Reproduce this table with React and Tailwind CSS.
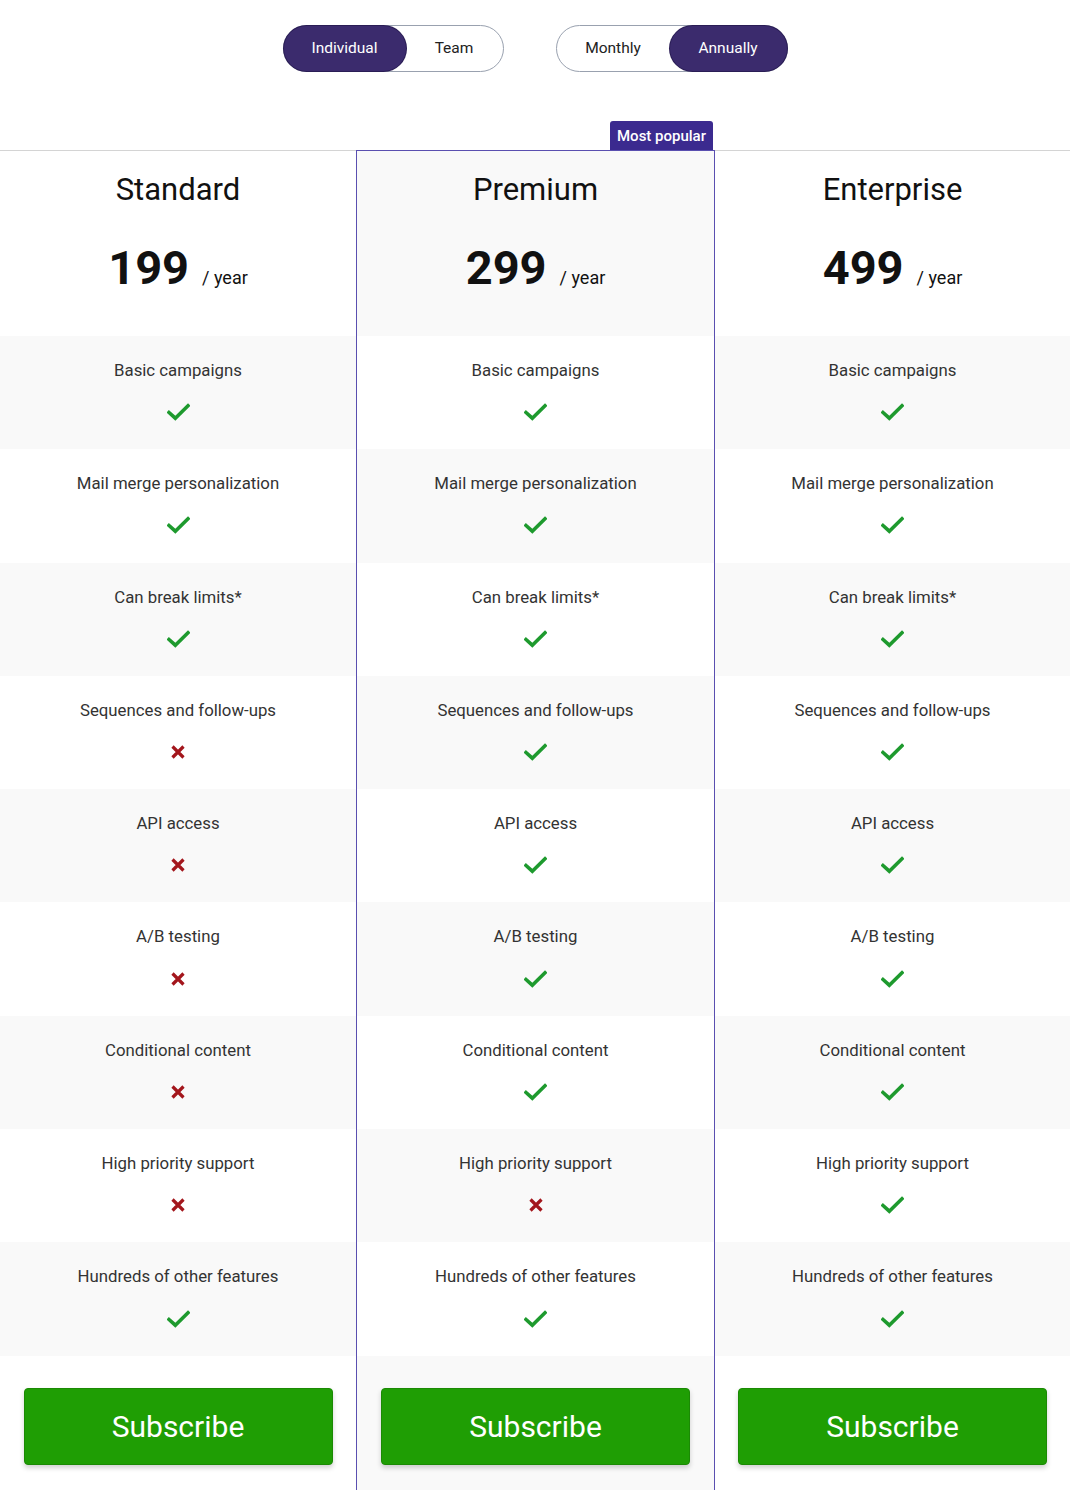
import React, { useState } from 'react';

const features = [
  'Basic campaigns',
  'Mail merge personalization',
  'Can break limits*',
  'Sequences and follow-ups',
  'API access',
  'A/B testing',
  'Conditional content',
  'High priority support',
  'Hundreds of other features',
];

const plans = [
  { name: 'Standard', price: 199, has: [1, 1, 1, 0, 0, 0, 0, 0, 1] },
  { name: 'Premium', price: 299, has: [1, 1, 1, 1, 1, 1, 1, 0, 1], popular: true },
  { name: 'Enterprise', price: 499, has: [1, 1, 1, 1, 1, 1, 1, 1, 1] },
];

function Check() {
  return (
    <svg width="23" height="18" viewBox="0 0 23 18" fill="none">
      <path d="M2 9.5l6.3 5.7L21 2.8" stroke="#1e9a2e" strokeWidth="3.6" strokeLinecap="square" />
    </svg>
  );
}

function Cross() {
  return (
    <svg width="16" height="16" viewBox="0 0 16 16" fill="none">
      <path d="M2.5 2.5l11 11M13.5 2.5l-11 11" stroke="#a3161c" strokeWidth="3.2" />
    </svg>
  );
}

function Toggle({ options, value, onChange }) {
  return (
    <div className="flex h-[47px] rounded-full border border-gray-400 bg-white">
      {options.map((o) => (
        <button
          key={o.label}
          onClick={() => onChange(o.label)}
          className={
            (value === o.label
              ? 'bg-[#3b2b6d] text-white shadow-[0_0_0_1px_#2a1d55] '
              : 'text-[#222] ') + 'h-full rounded-full text-[15.5px] ' + o.w
          }
        >
          {o.label}
        </button>
      ))}
    </div>
  );
}

function PlanColumn({ plan }) {
  const odd = plan.popular;
  const bgA = odd ? 'bg-[#f9f9f9]' : 'bg-white';
  const bgB = odd ? 'bg-white' : 'bg-[#f9f9f9]';
  return (
    <div
      className={
        'relative flex flex-col ' +
        (plan.popular ? 'border-x border-t border-[#5a4fb0] -mt-px' : '')
      }
    >
      {plan.popular && (
        <div className="absolute -top-[30px] right-px h-[29px] rounded-t-[3px] bg-[#3b2a8f] px-[7px] pt-[4px] text-[15px] font-medium text-white">
          Most popular
        </div>
      )}
      <div className={'flex h-[185px] flex-col items-center ' + bgA}>
        <div className="mt-[16px] text-[31px] text-[#111]">{plan.name}</div>
        <div className="mt-[30px] flex items-baseline">
          <span className="text-[47px] font-bold leading-none text-[#111]">{plan.price}</span>
          <span className="ml-[13px] text-[18px] text-[#111]">/ year</span>
        </div>
      </div>
      {features.map((f, i) => (
        <div
          key={f}
          className={'flex h-[113.3px] flex-col items-center ' + (i % 2 === 0 ? bgB : bgA)}
        >
          <div className="mt-[22px] text-[16.8px] text-[#333]">{f}</div>
          <div className="mt-[19px] flex h-[20px] items-center">
            {plan.has[i] ? <Check /> : <Cross />}
          </div>
        </div>
      ))}
      <div className={'flex flex-1 justify-center pt-[32px] pb-[25px] ' + bgA}>
        <button className="h-[77px] w-[309px] rounded-[4px] border border-[#1b8a04] bg-[#1f9e04] text-[30px] text-white shadow-[0_3px_5px_rgba(0,0,0,0.18)]">
          Subscribe
        </button>
      </div>
    </div>
  );
}

export default function App() {
  const [who, setWho] = useState('Individual');
  const [period, setPeriod] = useState('Annually');
  return (
    <div className="min-h-[1490px] bg-white font-['Roboto',sans-serif]">
      <div className="flex justify-center gap-[52px] pt-[25px]">
        <Toggle
          value={who}
          onChange={setWho}
          options={[
            { label: 'Individual', w: 'w-[122px]' },
            { label: 'Team', w: 'w-[97px]' },
          ]}
        />
        <Toggle
          value={period}
          onChange={setPeriod}
          options={[
            { label: 'Monthly', w: 'w-[113px]' },
            { label: 'Annually', w: 'w-[117px]' },
          ]}
        />
      </div>
      <div className="mt-[78px] grid grid-cols-[356px_359px_1fr] border-t border-[#d4d4d4]">
        {plans.map((p) => (
          <PlanColumn key={p.name} plan={p} />
        ))}
      </div>
    </div>
  );
}
